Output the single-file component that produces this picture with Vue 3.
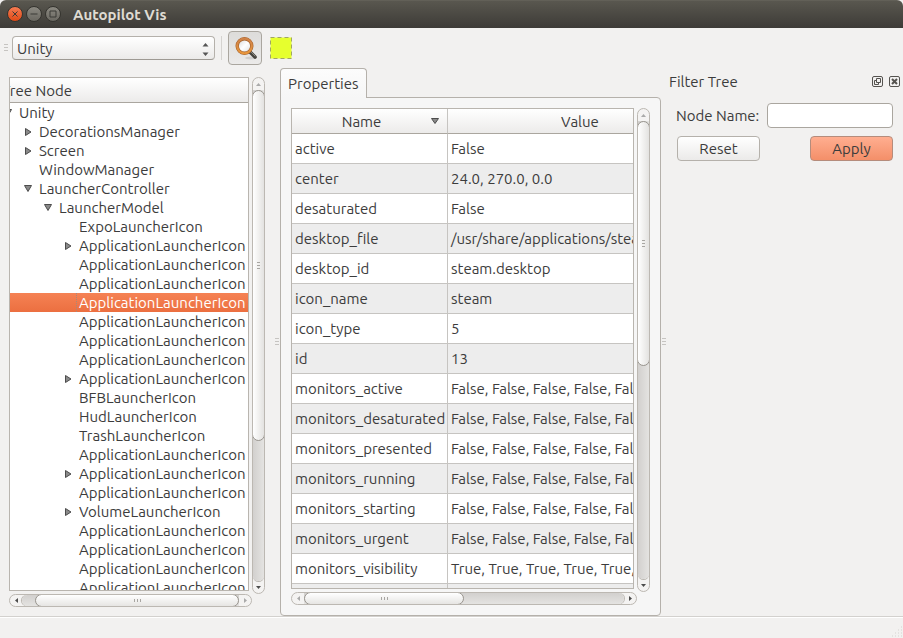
<script setup>
import { ref } from 'vue'

const rows = [
  [0, 'Unity', 'open'],
  [1, 'DecorationsManager', 'closed'],
  [1, 'Screen', 'closed'],
  [1, 'WindowManager'],
  [1, 'LauncherController', 'open'],
  [2, 'LauncherModel', 'open'],
  [3, 'ExpoLauncherIcon'],
  [3, 'ApplicationLauncherIcon', 'closed'],
  [3, 'ApplicationLauncherIcon'],
  [3, 'ApplicationLauncherIcon'],
  [3, 'ApplicationLauncherIcon'],
  [3, 'ApplicationLauncherIcon'],
  [3, 'ApplicationLauncherIcon'],
  [3, 'ApplicationLauncherIcon'],
  [3, 'ApplicationLauncherIcon', 'closed'],
  [3, 'BFBLauncherIcon'],
  [3, 'HudLauncherIcon'],
  [3, 'TrashLauncherIcon'],
  [3, 'ApplicationLauncherIcon'],
  [3, 'ApplicationLauncherIcon', 'closed'],
  [3, 'ApplicationLauncherIcon'],
  [3, 'VolumeLauncherIcon', 'closed'],
  [3, 'ApplicationLauncherIcon'],
  [3, 'ApplicationLauncherIcon'],
  [3, 'ApplicationLauncherIcon'],
  [3, 'ApplicationLauncherIcon'],
].map(([depth, label, state]) => ({ depth, label, state }))

const selected = ref(10)
const nodeName = ref('')
const source = ref('Unity')

const falses = 'False, False, False, False, False'
const properties = [
  ['active', 'False'],
  ['center', '24.0, 270.0, 0.0'],
  ['desaturated', 'False'],
  ['desktop_file', '/usr/share/applications/steam.desktop'],
  ['desktop_id', 'steam.desktop'],
  ['icon_name', 'steam'],
  ['icon_type', '5'],
  ['id', '13'],
  ['monitors_active', falses],
  ['monitors_desaturated', falses],
  ['monitors_presented', falses],
  ['monitors_running', falses],
  ['monitors_starting', falses],
  ['monitors_urgent', falses],
  ['monitors_visibility', 'True, True, True, True, True, True'],
  ['', ''],
]
</script>

<template>
  <div class="window">
    <header class="titlebar">
      <button class="wm close" aria-label="Close window">
        <svg viewBox="0 0 16 16"><path d="M5.5 5.5l5 5M10.5 5.5l-5 5" /></svg>
      </button>
      <button class="wm" aria-label="Minimize window">
        <svg viewBox="0 0 16 16"><path d="M4.5 8h7" /></svg>
      </button>
      <button class="wm" aria-label="Maximize window">
        <svg viewBox="0 0 16 16"><path d="M5 5h6v6H5z" /></svg>
      </button>
      <h1>Autopilot Vis</h1>
    </header>

    <div class="toolbar">
      <span class="grip"></span>
      <span class="combo">
        <select v-model="source" aria-label="Connection">
          <option>Unity</option>
        </select>
        <svg viewBox="0 0 7 13"><path d="M0.5 3.5L3.5 0L6.500 3.5zM0.5 9.500L3.5 13L6.500 9.500z" /></svg>
      </span>
      <span class="separator"></span>
      <button class="pick" aria-label="Pick node">
        <svg viewBox="0 0 24 24">
          <defs>
            <linearGradient id="rim" x1="0" y1="0" x2="0" y2="1">
              <stop offset="0" stop-color="#cf8248" />
              <stop offset="1" stop-color="#e8963c" />
            </linearGradient>
            <linearGradient id="glass" x1="0" y1="0" x2="1" y2="1">
              <stop offset="0" stop-color="#d0d0d0" />
              <stop offset="0.5" stop-color="#ffffff" />
              <stop offset="1" stop-color="#d8d8d8" />
            </linearGradient>
          </defs>
          <ellipse cx="18" cy="22" rx="6" ry="1.5" fill="#000" opacity=".1" />
          <path d="M17 16L22 21" stroke="#45433d" stroke-width="3.600" stroke-linecap="round" />
          <path d="M17.500 15.500L22 20" stroke="#8b8980" stroke-width="1" stroke-linecap="round" />
          <circle cx="11.500" cy="10" r="7.300" fill="url(#glass)" stroke="#a3602a" stroke-width="3.400" />
          <circle cx="11.500" cy="10" r="7.300" fill="none" stroke="url(#rim)" stroke-width="2.200" />
        </svg>
      </button>
      <span class="swatch">
        <svg viewBox="0 0 22 22">
          <path d="M0.5 0.5h21v21h-21z" fill="#e6ff2e" stroke="#a0a566" stroke-dasharray="4 3" />
        </svg>
      </span>
    </div>

    <main class="content">
      <section class="dock-tree">
        <div class="frame tree">
          <div class="tree-head"><span>Tree Node</span></div>
          <ul>
            <li
              v-for="(row, i) in rows"
              :key="i"
              :class="['depth-' + row.depth, { selected: i === selected }]"
              @click="selected = i"
            >
              <span class="toggle">
                <svg v-if="row.state === 'open'" viewBox="0 0 8 8"><path d="M0.5 0.5h7L4 6.500z" /></svg>
                <svg v-else-if="row.state === 'closed'" viewBox="0 0 8 8"><path d="M1.5 0.5v7L7 4z" /></svg>
              </span>
              <span class="label">{{ row.label }}</span>
            </li>
          </ul>
        </div>
        <div class="scroll vertical">
          <button class="off" aria-label="Scroll tree up"><svg viewBox="0 0 5 3"><path d="M0 3L2.5 0L5 3z" /></svg></button>
          <div class="track"><div class="thumb" :style="{ height: '71.5%' }"><i></i></div></div>
          <button aria-label="Scroll tree down"><svg viewBox="0 0 5 3"><path d="M0 0L2.5 3L5 0z" /></svg></button>
        </div>
        <div class="scroll horizontal">
          <button aria-label="Scroll tree left"><svg viewBox="0 0 3 5"><path d="M3 0L0 2.5L3 5z" /></svg></button>
          <div class="track end"><div class="thumb" :style="{ width: '94%' }"><i></i></div></div>
          <button class="off" aria-label="Scroll tree right"><svg viewBox="0 0 3 5"><path d="M0 0L3 2.5L0 5z" /></svg></button>
        </div>
      </section>

      <span class="handle"><i></i></span>

      <section class="tabs">
        <button class="tab">Properties</button>
        <div class="panel">
          <div class="frame">
            <table>
              <thead>
                <tr>
                  <th class="name">
                    <span class="sort">Name<svg viewBox="0 0 8 6"><path d="M0.5 0.5h7L4 5.5z" /></svg></span>
                  </th>
                  <th class="value">Value</th>
                </tr>
              </thead>
              <tbody>
                <tr v-for="([name, value], i) in properties" :key="i">
                  <td>{{ name }}</td>
                  <td>{{ value }}</td>
                </tr>
              </tbody>
            </table>
          </div>
          <div class="scroll vertical">
            <button class="off" aria-label="Scroll table up"><svg viewBox="0 0 5 3"><path d="M0 3L2.5 0L5 3z" /></svg></button>
            <div class="track"><div class="thumb" :style="{ height: '53.5%' }"><i></i></div></div>
            <button aria-label="Scroll table down"><svg viewBox="0 0 5 3"><path d="M0 0L2.5 3L5 0z" /></svg></button>
          </div>
          <div class="scroll horizontal">
            <button class="off" aria-label="Scroll table left"><svg viewBox="0 0 3 5"><path d="M3 0L0 2.5L3 5z" /></svg></button>
            <div class="track"><div class="thumb" :style="{ width: '50%' }"><i></i></div></div>
            <button aria-label="Scroll table right"><svg viewBox="0 0 3 5"><path d="M0 0L3 2.5L0 5z" /></svg></button>
          </div>
        </div>
      </section>

      <span class="handle"><i></i></span>

      <aside class="dock-filter">
        <div class="dock-title">
          <h2>Filter Tree</h2>
          <button aria-label="Float panel">
            <svg viewBox="0 0 11 11">
              <rect x="0.5" y="0.5" width="10" height="10" rx="1.5" />
              <path d="M4.5 2.5h4v4h-4zM4.5 4.5h-2v4h4v-2" />
            </svg>
          </button>
          <button aria-label="Close panel">
            <svg viewBox="0 0 11 11">
              <rect x="0.5" y="0.5" width="10" height="10" rx="1.5" />
              <path d="M3 3l5 5M8 3l-5 5" stroke-width="2" />
            </svg>
          </button>
        </div>
        <form @submit.prevent>
          <div class="field">
            <label for="node-name">Node Name:</label>
            <input id="node-name" v-model="nodeName" type="text" />
          </div>
          <div class="actions">
            <button type="reset">Reset</button>
            <button type="submit" class="primary">Apply</button>
          </div>
        </form>
      </aside>
    </main>

    <footer class="statusbar">
      <svg viewBox="0 0 12 12"><path d="M10 1h1M7 4h1M10 4h1M4 7h1M7 7h1M10 7h1M1 10h1M4 10h1M7 10h1M10 10h1" /></svg>
    </footer>
  </div>
</template>

<style>
body {
  margin: 0;
  background: #f2f1f0;
}
</style>

<style scoped>
.window,
.window * {
  box-sizing: border-box;
}
.window {
  display: flex;
  flex-direction: column;
  height: 100vh;
  overflow: hidden;
  background: #f2f1f0;
  color: #3c3c3c;
  font: 15px/19px Ubuntu, "Noto Sans", sans-serif;
}
button,
select,
input {
  margin: 0;
  padding: 0;
  font: inherit;
  color: inherit;
}
svg {
  display: block;
}
h1,
h2 {
  margin: 0;
  font: inherit;
}

/* title bar */
.titlebar {
  display: flex;
  flex: none;
  align-items: center;
  gap: 3px;
  height: 28px;
  padding: 0 7px;
  border-radius: 6px 6px 0 0;
  background: linear-gradient(#6b6960, #59574f 1px, #3d3b37);
  color: #dfdbd2;
}
.titlebar h1 {
  margin-left: 9px;
  font-weight: 700;
}
.wm {
  width: 16px;
  height: 16px;
  border: 1px solid #35342f;
  border-radius: 50%;
  background: linear-gradient(#8b8981, #6a6861);
}
.wm svg {
  width: 16px;
  height: 16px;
  margin: -1px;
  fill: none;
  stroke: #3b3a36;
}
.wm.close {
  background: linear-gradient(#f57b52, #df4a16);
}

/* toolbar */
.toolbar {
  display: flex;
  flex: none;
  align-items: center;
  height: 40px;
  padding: 0 4px;
}
.grip,
.handle i {
  width: 4px;
  height: 8px;
  background: repeating-linear-gradient(#c6c4c1 0 1px, transparent 1px 3px);
}
.combo {
  display: grid;
  align-items: center;
  margin-left: 4px;
}
.combo select,
.combo svg {
  grid-area: 1 / 1;
}
.combo select {
  width: 203px;
  height: 24px;
  padding: 0 4px;
  appearance: none;
  border: 1px solid #b5b1ab;
  border-bottom-color: #9d9993;
  border-radius: 4px;
  background: linear-gradient(#fff, #ebeae9);
}
.combo svg {
  width: 7px;
  height: 13px;
  margin-top: 3px;
  margin-right: 6px;
  justify-self: end;
  fill: #555;
  pointer-events: none;
}
.separator {
  width: 1px;
  height: 24px;
  margin: 0 6px;
  background: #d5d3d0;
}
.pick {
  display: grid;
  place-items: center;
  width: 34px;
  height: 34px;
  border: 1px solid #aaa69f;
  border-radius: 4px;
  background: linear-gradient(#dddcda, #ebeae9);
}
.pick svg {
  width: 24px;
  height: 24px;
}
.swatch {
  margin-left: 8px;
}
.swatch svg {
  width: 22px;
  height: 22px;
}

/* main area */
.content {
  display: grid;
  flex: 1;
  grid-template-columns: 274px 6px minmax(0, 1fr) 6px 236px;
  min-height: 0;
  border-bottom: 1px solid #d3d1ce;
}
.handle {
  display: grid;
  place-items: center;
}
.frame {
  overflow: hidden;
  min-width: 0;
  min-height: 0;
  border: 1px solid #b9b5af;
  background: #fff;
}
.dock-tree,
.panel {
  display: grid;
  grid-template: minmax(0, 1fr) 16px / minmax(0, 1fr) 16px;
  min-height: 0;
}
.dock-tree {
  padding: 9px;
}
.tree-head {
  display: flex;
  height: 25px;
  align-items: center;
  border-bottom: 1px solid #aaa69f;
  background: linear-gradient(#fff, #ecebea);
}
.tree-head span {
  margin-left: -8px;
  white-space: nowrap;
}
.tree ul {
  margin: 0;
  padding: 0;
  list-style: none;
}
.tree li {
  display: flex;
  height: 19px;
  line-height: 19px;
  white-space: nowrap;
}
.tree .toggle {
  display: grid;
  flex: none;
  place-items: center;
  width: 16px;
  margin-left: -10px;
}
.tree .depth-1 {
  padding-left: 20px;
}
.tree .depth-2 {
  padding-left: 40px;
}
.tree .depth-3 {
  padding-left: 60px;
}
.toggle svg {
  width: 8px;
  height: 8px;
  fill: #8a8a8a;
  stroke: #4c4c4c;
}
.tree .label {
  flex: 1;
  padding-left: 2px;
  border-left: 1px dotted transparent;
}
.selected {
  background: linear-gradient(#f58254, #ec6f40);
  color: #fff;
}
.tree .selected .label {
  border-color: #a08a80;
}

/* scroll bars */
.scroll {
  display: flex;
  overflow: hidden;
  border: 1px solid #bcb8b2;
  border-radius: 7px;
  background: #f4f3f2;
}
.scroll.vertical {
  flex-direction: column;
  width: 13px;
  margin: 0 0 -3px 3px;
}
.scroll.horizontal {
  height: 13px;
  margin: 3px -3px 0 0;
}
.scroll button {
  display: grid;
  flex: none;
  place-items: center;
  width: 12px;
  height: 11px;
  border: 0;
  background: none;
}
.scroll.vertical button {
  width: 11px;
  height: 12px;
}
.scroll svg {
  width: 5px;
  height: 5px;
  fill: #4c4c4c;
}
.scroll .off svg {
  fill: #aaa;
}
.track {
  display: flex;
  flex: 1;
}
.vertical .track {
  flex-direction: column;
  border-radius: 0 0 7px 7px;
  box-shadow: 0 1px #bcb8b2;
  background: linear-gradient(90deg, #d2d0ce, #e4e3e1);
}
.horizontal .track {
  border-radius: 0 7px 7px 0;
  box-shadow: 1px 0 #bcb8b2;
  background: linear-gradient(#d2d0ce, #e4e3e1);
}
.horizontal .track.end {
  justify-content: flex-end;
  border-radius: 7px 0 0 7px;
  box-shadow: -1px 0 #bcb8b2;
}
.thumb {
  display: grid;
  place-items: center;
  border: 1px solid #98948e;
  border-radius: 7px;
}
.vertical .thumb {
  margin: 0 -1px;
  background: linear-gradient(90deg, #fff, #e3e2e0);
}
.horizontal .thumb {
  margin: -1px 0;
  background: linear-gradient(#fff, #e6e5e3);
}
.vertical i {
  width: 3px;
  height: 7px;
  background: repeating-linear-gradient(#a8a6a2 0 1px, transparent 1px 3px);
}
.horizontal i {
  width: 7px;
  height: 3px;
  background: repeating-linear-gradient(90deg, #a8a6a2 0 1px, transparent 1px 3px);
}

/* properties */
.tabs {
  display: flex;
  flex-direction: column;
  align-items: flex-start;
  min-height: 0;
}
.tab {
  z-index: 1;
  height: 30px;
  margin-bottom: -1px;
  padding: 0 7px;
  border: 1px solid #b5b1ab;
  border-bottom: 0;
  border-radius: 4px 4px 0 0;
  background: linear-gradient(#fcfcfc, #f6f6f6);
}
.panel {
  flex: 1;
  width: 100%;
  padding: 10px;
  border: 1px solid #b5b1ab;
  border-radius: 0 4px 4px 4px;
  background: #f6f6f6;
}
table {
  width: 421px;
  border-collapse: separate;
  border-spacing: 0;
  table-layout: fixed;
}
th,
td {
  overflow: hidden;
  padding: 0 3px;
  border-right: 1px solid #c6c4c1;
  border-bottom: 1px solid #c6c4c1;
  white-space: nowrap;
}
th {
  height: 25px;
  border-bottom-color: #aaa69f;
  background: linear-gradient(#fff, #ecebea);
  font-weight: 400;
}
th.name {
  width: 156px;
}
.sort {
  display: grid;
  grid-template-columns: 1fr 14px;
  align-items: center;
  justify-items: center;
  padding-right: 2px;
}
.sort svg {
  width: 8px;
  height: 6px;
  fill: #8a8a8a;
  stroke: #4c4c4c;
}
td {
  height: 30px;
}
tbody tr:nth-child(even) {
  background: #ededed;
}

/* filter dock */
.dock-title {
  display: flex;
  align-items: center;
  gap: 6px;
  height: 26px;
  padding: 0 3px 0 2px;
}
.dock-title h2 {
  flex: 1;
}
.dock-title button {
  border: 0;
  background: none;
}
.dock-title svg {
  width: 11px;
  height: 11px;
  fill: none;
  stroke: #55534f;
}
form {
  display: grid;
  grid-template-columns: minmax(0, 1fr);
  gap: 8px;
  padding: 9px 10px 0 9px;
}
.field {
  display: flex;
  align-items: center;
  gap: 8px;
}
.field label {
  white-space: nowrap;
}
.field input {
  flex: 1;
  min-width: 0;
  height: 25px;
  padding: 0 4px;
  border: 1px solid #aaa69f;
  border-radius: 4px;
  background: #fff;
}
.actions {
  display: flex;
  justify-content: space-between;
  padding-left: 1px;
}
.actions button {
  width: 83px;
  height: 25px;
  border: 1px solid #b5b1ab;
  border-radius: 4px;
  background: linear-gradient(#fff, #ebeae9);
}
.actions .primary {
  border-color: #b58c7c;
  background: linear-gradient(#ffae90, #f48f69);
}

/* status bar */
.statusbar {
  display: flex;
  flex: none;
  align-items: flex-end;
  justify-content: flex-end;
  height: 21px;
  border-top: 1px solid #fff;
}
.statusbar svg {
  width: 12px;
  height: 12px;
  stroke: #d5d3d0;
}
</style>
